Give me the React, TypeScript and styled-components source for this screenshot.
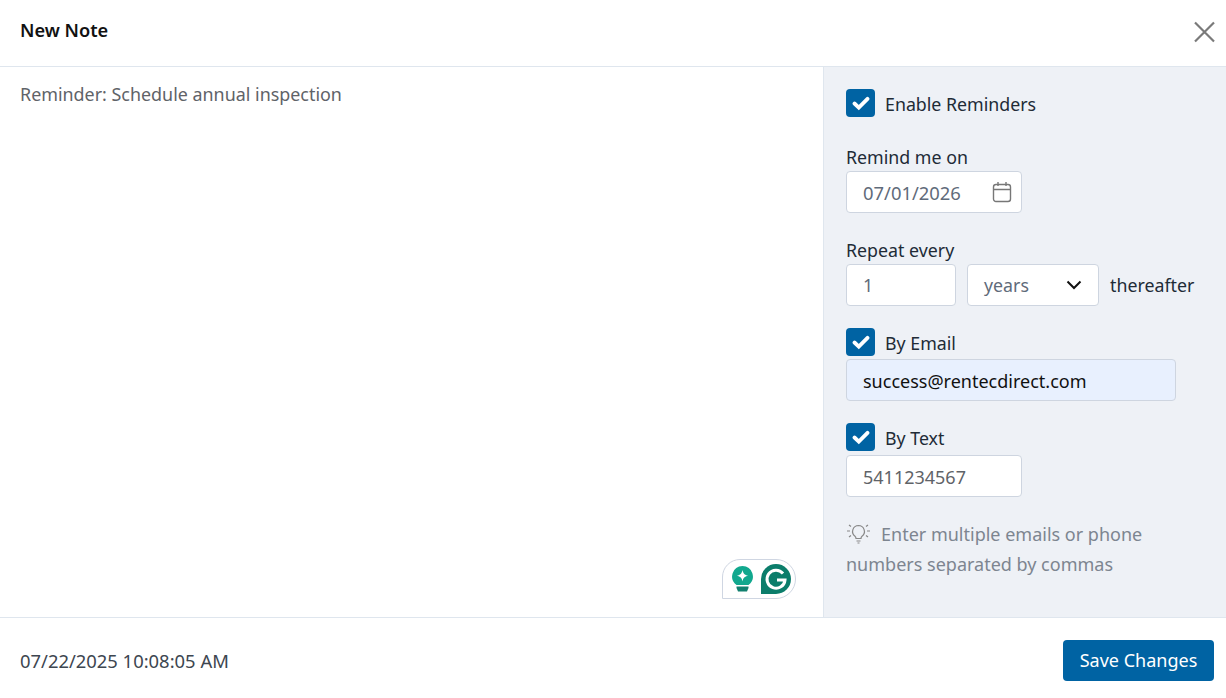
import React from "react";
import styled, { createGlobalStyle } from "styled-components";

const GlobalStyle = createGlobalStyle`
    html, body {
        margin: 0;
        padding: 0;
        background: #ffffff;
    }
    body {
        font-family: "Noto Sans", "Open Sans", sans-serif;
    }
`;

const Modal = styled.div`
    width: 1226px;
    height: 698px;
    display: flex;
    flex-direction: column;
    overflow: hidden;
    background: #fff;
    color: #212b36;
`;

const Header = styled.header`
    flex: none;
    display: flex;
    align-items: center;
    justify-content: space-between;
    padding: 0 10px 6px 20px;
    box-sizing: border-box;
    border-bottom: 1px solid #dfe6ee;
    height: 67px;
`;

const Title = styled.h1`
    margin: 0;
    font-size: 18.2px;
    font-weight: 600;
    color: #111;
`;

const CloseButton = styled.button`
    border: 0;
    background: none;
    padding: 0;
    width: 24px;
    height: 24px;
    display: flex;
    color: #7a7a7a;
    margin-top: 4px;
`;

const Body = styled.main`
    flex: 1;
    display: flex;
    min-height: 0;
`;

const NotePane = styled.section`
    flex: 1;
    position: relative;
    padding: 15px 20px;
    font-size: 17.9px;
    line-height: 24px;
    color: #5f6368;
`;

const GrammarlyBadge = styled.div`
    position: absolute;
    left: 722px;
    top: 492px;
    width: 74px;
    height: 40px;
    box-sizing: border-box;
    border: 1px solid #cfd6e2;
    border-radius: 18px 20px 20px 0;
    background: #fff;
    display: flex;
    align-items: center;
    gap: 8px;
    padding-left: 9px;
`;

const Sidebar = styled.aside`
    width: 403px;
    flex: none;
    box-sizing: border-box;
    background: #eef1f6;
    border-left: 1px solid #dfe6ee;
    padding: 22px 0 0 22px;
    display: flex;
    flex-direction: column;
    font-size: 17.8px;
    line-height: 24px;
`;

const CheckRow = styled.label<{ $mt?: number }>`
    display: flex;
    align-items: center;
    gap: 10px;
    height: 28px;
    margin-top: ${(p) => p.$mt ?? 0}px;
`;

const CheckBox = styled.span`
    width: 29px;
    height: 28px;
    border-radius: 4px;
    background: #0063a3;
    display: flex;
    align-items: center;
    justify-content: center;
    flex: none;
`;

const CheckText = styled.span`
    padding-top: 2px;
`;

const FieldLabel = styled.div<{ $mt: number }>`
    margin-top: ${(p) => p.$mt}px;
    height: 24px;
`;

const Row = styled.div<{ $mt?: number }>`
    display: flex;
    align-items: center;
    margin-top: ${(p) => p.$mt ?? 2}px;
`;

const Box = styled.div<{ $w: number; $bg?: string; $color?: string; $ml?: number }>`
    width: ${(p) => p.$w}px;
    height: 42px;
    margin-left: ${(p) => p.$ml ?? 0}px;
    box-sizing: border-box;
    flex: none;
    display: flex;
    align-items: center;
    justify-content: space-between;
    padding: 0 16px;
    background: ${(p) => p.$bg ?? "#fff"};
    border: 1px solid #ced5e0;
    border-radius: 4px;
    color: ${(p) => p.$color ?? "#5f6368"};
`;

const AfterText = styled.span`
    margin-left: 11px;
    white-space: nowrap;
`;

const Hint = styled.p`
    margin: 22px 0 0 0;
    width: 330px;
    font-size: 18px;
    line-height: 30px;
    color: #7d8590;
`;

const HintIcon = styled.svg`
    vertical-align: -3px;
    margin-right: 10px;
`;

const Footer = styled.footer`
    height: 81px;
    flex: none;
    box-sizing: border-box;
    border-top: 1px solid #dfe6ee;
    display: flex;
    align-items: center;
    justify-content: space-between;
    padding: 4px 12px 0 20px;
    font-size: 18px;
    color: #3d4650;
`;

const Digits = styled.span`
    font-size: 18.4px;
    padding-top: 1px;
`;

const InputValue = styled.span`
    font-size: 18px;
    padding-top: 1px;
`;

const SaveButton = styled.button`
    width: 151px;
    height: 41px;
    border: 0;
    border-radius: 4px;
    background: #0063a3;
    color: #fff;
    font-family: inherit;
    font-size: 18px;
    padding: 0;
`;

const Check = () => (
    <svg width="18" height="15" viewBox="0 0 18 15" fill="none">
        <path d="M2.500 7.500 6.800 11.600 15.500 2.800" stroke="#fff" strokeWidth="3.800" strokeLinecap="round" />
    </svg>
);

const App = () => (
    <Modal>
        <GlobalStyle />
        <Header>
            <Title>New Note</Title>
            <CloseButton aria-label="Close">
                <svg width="24" height="24" viewBox="0 0 24 24" fill="none">
                    <path d="M3 2.500 22 21.500M22 2.500 3 21.500" stroke="currentColor" strokeWidth="2.200" />
                </svg>
            </CloseButton>
        </Header>
        <Body>
            <NotePane>
                Reminder: Schedule annual inspection
                <GrammarlyBadge>
                    <svg width="21" height="26" viewBox="0 0 21 26">
                        <path d="M10.500 0a10.500 10.500 0 0 1 6 19H4.500a10.500 10.500 0 0 1 6-19z" fill="#11a88e" />
                        <path d="M10.500 4c.8 3.700 2 5 5.700 5.800-3.700.8-4.900 2-5.700 5.700-.8-3.700-2-4.900-5.700-5.700 3.700-.8 4.900-2.100 5.700-5.800z" fill="#fff" />
                        <path d="M4.500 20.500h12v1.500l-1.500 3.500H6L4.500 22z" fill="#11806f" />
                    </svg>
                    <svg width="30" height="30" viewBox="0 0 30 30" fill="none">
                        <path d="M15 0a15 15 0 1 1 0 30H0V15A15 15 0 0 1 15 0z" fill="#0b7d6b" />
                        <path d="M22 9.500a9 9 0 1 0 2 6.500h-8" stroke="#fff" strokeWidth="3" />
                    </svg>
                </GrammarlyBadge>
            </NotePane>
            <Sidebar>
                <CheckRow>
                    <CheckBox><Check /></CheckBox>
                    <CheckText>Enable Reminders</CheckText>
                </CheckRow>
                <FieldLabel $mt={28}>Remind me on</FieldLabel>
                <Row>
                    <Box $w={176} $color="#5f6b7a">
                        <Digits>07/01/2026</Digits>
                        <svg width="20" height="22" viewBox="0 0 20 22" fill="none" stroke="#777" strokeWidth="1.400" style={{ marginRight: -7 }}>
                            <rect x="1.500" y="3.500" width="17" height="17" rx="2.500" />
                            <path d="M1.500 8.500h17M6 1v4M14 1v4" />
                        </svg>
                    </Box>
                </Row>
                <FieldLabel $mt={25}>Repeat every</FieldLabel>
                <Row>
                    <Box $w={110} $color="#5f6b7a">1</Box>
                    <Box $w={132} $ml={11} $color="#5f6b7a">
                        years
                        <svg width="16" height="10" viewBox="0 0 16 10" fill="none" stroke="#111" strokeWidth="2">
                            <path d="M1.500 1.500 8 8l6.500-6.500" />
                        </svg>
                    </Box>
                    <AfterText>thereafter</AfterText>
                </Row>
                <CheckRow $mt={22}>
                    <CheckBox><Check /></CheckBox>
                    <CheckText>By Email</CheckText>
                </CheckRow>
                <Row $mt={3}>
                    <Box $w={330} $bg="#e8f0fe" $color="#111"><InputValue>success@rentecdirect.com</InputValue></Box>
                </Row>
                <CheckRow $mt={22}>
                    <CheckBox><Check /></CheckBox>
                    <CheckText>By Text</CheckText>
                </CheckRow>
                <Row $mt={4}>
                    <Box $w={176}><InputValue>5411234567</InputValue></Box>
                </Row>
                <Hint>
                    <HintIcon width="25" height="22" viewBox="0 0 25 22" fill="none" stroke="#888" strokeWidth="1.200">
                        <path d="M12.500 3.500a6 6 0 0 1 3.500 10.800c-.7.600-1 1.200-1 2.200h-5c0-1-.3-1.600-1-2.200A6 6 0 0 1 12.500 3.500z" />
                        <path d="M10.500 19h4M11.500 21h2M1 9h3M21 9h3M3 3l2 1.500M22 3l-2 1.500M3 15l2-1.500M22 15l-2-1.500" />
                    </HintIcon>
                    Enter multiple emails or phone numbers separated by commas
                </Hint>
            </Sidebar>
        </Body>
        <Footer>
            <Digits>07/22/2025 10:08:05 AM</Digits>
            <SaveButton>Save Changes</SaveButton>
        </Footer>
    </Modal>
);

export default App;
